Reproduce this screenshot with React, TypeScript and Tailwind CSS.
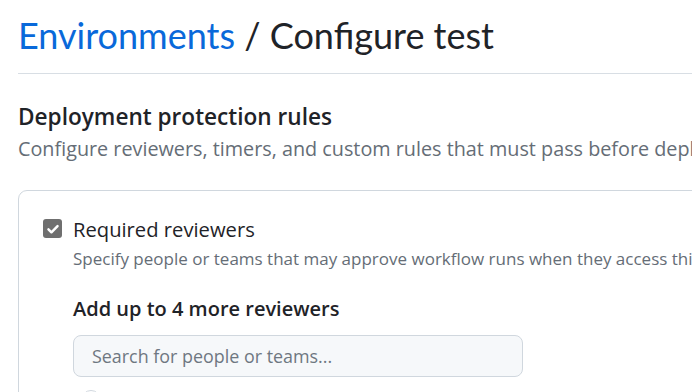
export default function App() {
  return (
    <div className="h-[392px] w-[692px] overflow-hidden bg-white pl-[18px] font-['Open_Sans',sans-serif] text-[#1f2328]">
      {/* HEADER */}
      <h1 className="pt-[10px] font-['Lato',sans-serif] text-[36px] leading-[50px] font-normal">
        <a className="text-[#0969da]">Environments</a> / Configure test
      </h1>
      <div className="mt-[13px] h-px w-[900px] bg-[#d8dee4]" />

      {/* PROTECTION RULES */}
      <h2 className="mt-[29px] text-[22.6px] leading-[28px] font-semibold">
        Deployment protection rules
      </h2>
      <p className="mt-[4.5px] whitespace-nowrap text-[19.8px] leading-[26px] text-[#656d76]">
        Configure reviewers, timers, and custom rules that must pass before deployments to this environment can proceed.
      </p>

      <div className="mt-[28.5px] w-[900px] rounded-[9px] border border-[#d0d7de] pl-[24px] pt-[24.5px]">
        <div className="flex items-center gap-[11px]">
          <span className="flex h-[19px] w-[19px] items-center justify-center rounded-[3px] bg-[#6f6f6f]">
            <svg width="14" height="14" viewBox="0 0 16 16" fill="none">
              <path d="M2.8 8.4l3.4 3.4L13.2 4.6" stroke="white" strokeWidth="2.8" strokeLinecap="round" strokeLinejoin="round" />
            </svg>
          </span>
          <span className="text-[20.2px] leading-[26px] font-medium">Required reviewers</span>
        </div>
        <p className="ml-[30px] mt-[6px] whitespace-nowrap text-[17px] leading-[22px] text-[#656d76]">
          Specify people or teams that may approve workflow runs when they access this environment.
        </p>

        <div className="ml-[30px] mt-[26.5px]">
          <h3 className="text-[20px] leading-[26px] font-semibold">Add up to 4 more reviewers</h3>
          <div className="mt-[13px] flex h-[42px] w-[450px] items-center rounded-[8px] border border-[#d0d7de] bg-[#f6f8fa] px-[18px] text-[17.9px] text-[#6e7781]">
            Search for people or teams...
          </div>
          <div className="ml-[8px] mt-[13px] h-[20px] w-[20px] rounded-full border border-[#d0d7de]" />
        </div>
      </div>
    </div>
  );
}
